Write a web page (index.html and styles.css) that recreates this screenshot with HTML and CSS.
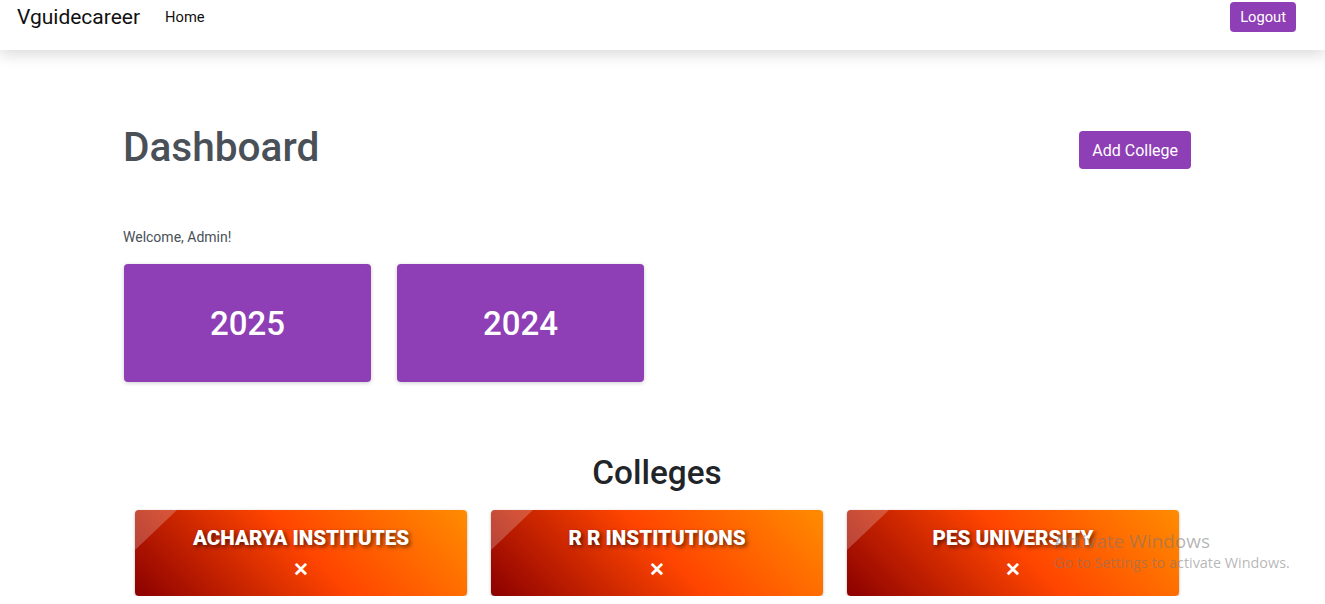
FILE: index.html
```html
<!DOCTYPE html>
<html lang="en">
<head>
    <meta charset="UTF-8">
    <meta name="viewport" content="width=device-width, initial-scale=1.0">
    <title>Vguidecareer - Dashboard</title>
    <link rel="stylesheet" href="styles.css">
</head>
<body>
    <nav class="navbar">
        <a class="brand" href="#">Vguidecareer</a>
        <a class="nav-link" href="#">Home</a>
        <button class="btn btn-logout">Logout</button>
    </nav>

    <main class="container">
        <div class="page-head">
            <h1 class="title">Dashboard</h1>
            <button class="btn btn-add">Add College</button>
        </div>

        <p class="welcome">Welcome, Admin!</p>

        <div class="years">
            <div class="year-card">2025</div>
            <div class="year-card">2024</div>
        </div>

        <h2 class="section-title">Colleges</h2>
        <div class="colleges">
            <div class="college-card">
                <h3>ACHARYA INSTITUTES</h3>
                <span class="remove">&#x2715;</span>
            </div>
            <div class="college-card">
                <h3>R R INSTITUTIONS</h3>
                <span class="remove">&#x2715;</span>
            </div>
            <div class="college-card">
                <h3>PES UNIVERSITY</h3>
                <span class="remove">&#x2715;</span>
            </div>
        </div>
    </main>

    <div class="watermark">
        <div class="wm-title">Activate Windows</div>
        <div class="wm-sub">Go to Settings to activate Windows.</div>
    </div>
</body>
</html>
```

FILE: styles.css
```css
body {
    font-family: Roboto, "Liberation Sans", Arial, sans-serif;
    margin: 0;
    padding: 0;
    color: #212529;
    background: #fff;
    overflow: hidden;
}

.navbar {
    display: flex;
    align-items: center;
    height: 50px;
    padding: 0 29px 0 17px;
    background: #fff;
    box-shadow: 0 5px 14px rgba(0, 0, 0, 0.14);
    position: relative;
}

.brand {
    font-size: 21px;
    color: #111;
    text-decoration: none;
    margin-top: -16px;
}

.nav-link {
    font-size: 14.7px;
    color: #111;
    text-decoration: none;
    margin-left: 25px;
    margin-top: -16px;
}

.btn {
    font-family: inherit;
    border: none;
    border-radius: 4px;
    background: #8f3fb6;
    color: #fff;
    cursor: pointer;
}

.btn-logout {
    margin-left: auto;
    font-size: 14.7px;
    height: 30px;
    padding: 0 10px;
    margin-top: -16px;
}

.container {
    width: 1068px;
    margin-left: 123px;
    padding-top: 73px;
}

.page-head {
    display: flex;
    justify-content: space-between;
    align-items: flex-start;
}

.title {
    font-size: 40.6px;
    font-weight: 500;
    color: #495057;
    margin: 0;
    line-height: 48px;
}

.btn-add {
    font-size: 16px;
    height: 38px;
    padding: 0 13px;
    margin-top: 8px;
}

.welcome {
    font-size: 14px;
    color: #495057;
    margin: 56px 0 0;
    line-height: 20px;
}

.years {
    display: flex;
    gap: 26px;
    margin-top: 17px;
    margin-left: 1px;
}

.year-card {
    width: 247px;
    height: 118px;
    display: flex;
    justify-content: center;
    align-items: center;
    background: #8f3fb6;
    color: #fff;
    font-size: 33px;
    font-weight: 500;
    border-radius: 4px;
    box-shadow: 0 1px 4px rgba(0, 0, 0, 0.2);
}

.section-title {
    text-align: center;
    font-size: 33.3px;
    font-weight: 500;
    margin: 71px 0 0;
    line-height: 40px;
    color: #212529;
}

.colleges {
    display: flex;
    gap: 24px;
    justify-content: center;
    margin-top: 17px;
}

.college-card {
    position: relative;
    width: 332px;
    height: 86px;
    box-sizing: border-box;
    padding-top: 16px;
    text-align: center;
    border-radius: 4px;
    overflow: hidden;
    color: #fff;
    background: linear-gradient(45deg, #8b0000 0%, #ff4500 52%, #ff8c00 100%);
    box-shadow: 0 1px 3px rgba(0, 0, 0, 0.3);
}

.college-card::before {
    content: "";
    position: absolute;
    left: 0;
    top: 0;
    width: 42px;
    height: 40px;
    background: rgba(255, 255, 255, 0.22);
    clip-path: polygon(0 0, 100% 0, 0 100%);
}

.college-card h3 {
    margin: 0;
    font-size: 20.6px;
    font-weight: 900;
    line-height: 24px;
    text-shadow: 2px 2px 4px rgba(0, 0, 0, 0.6);
}

.remove {
    display: block;
    margin-top: 9px;
    font-size: 19px;
    font-weight: 700;
    line-height: 22px;
}

.watermark {
    position: absolute;
    left: 1054px;
    top: 529px;
    color: rgba(120, 120, 120, 0.55);
    font-family: "Open Sans", "Noto Sans", sans-serif;
    pointer-events: none;
}

.wm-title {
    font-size: 19px;
    line-height: 24px;
}

.wm-sub {
    font-size: 14.4px;
    line-height: 20px;
}
```
